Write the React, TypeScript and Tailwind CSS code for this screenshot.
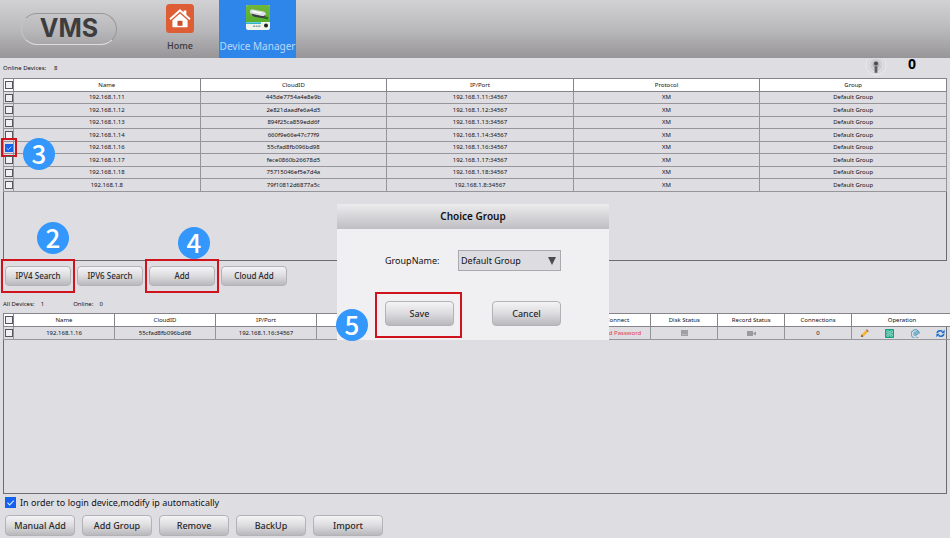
import React from "react";

type Step = "2" | "3" | "4" | "5";

const onlineDevices = [
  ["192.168.1.11", "445de7754a4e8e9b", "192.168.1.11:34567"],
  ["192.168.1.12", "2e821daadfe6a4d5", "192.168.1.12:34567"],
  ["192.168.1.13", "894f25ca859edd6f", "192.168.1.13:34567"],
  ["192.168.1.14", "660f9e66e47c77f9", "192.168.1.14:34567"],
  ["192.168.1.16", "55cfad8fb096bd98", "192.168.1.16:34567"],
  ["192.168.1.17", "fece0860b26678d5", "192.168.1.17:34567"],
  ["192.168.1.18", "75715046ef5e7d4a", "192.168.1.18:34567"],
  ["192.168.1.8", "79f10812d6877a5c", "192.168.1.8:34567"],
];

function StepBadge({ step, className }: { step: Step; className: string }) {
  return (
    <span
      className={`absolute z-10 flex size-8 items-center justify-center rounded-full bg-[#3397fb] pb-0.5 font-['Noto_Sans_CJK_SC',sans-serif] text-[26px] leading-none font-medium text-white ${className}`}
    >
      {step}
    </span>
  );
}

function Frame({ className }: { className: string }) {
  return <span className={`pointer-events-none absolute border-2 border-[#d0121c] ${className}`} />;
}

function PushButton({ children, className = "" }: { children: React.ReactNode; className?: string }) {
  return (
    <button
      type="button"
      className={`block rounded border border-[#b3b2b6] bg-linear-to-b from-[#f4f4f5] via-[#dcdbde] to-[#b9b8bc] leading-none font-medium whitespace-nowrap text-[#2a2a2d] ${className}`}
    >
      {children}
    </button>
  );
}

function Tick({ label, checked = false, large = false }: { label: string; checked?: boolean; large?: boolean }) {
  return (
    <span className={`relative block ${large ? "size-[11px]" : "mx-auto size-2"}`}>
      <input
        type="checkbox"
        id={label.replace(/\W/g, "-")}
        aria-label={label}
        defaultChecked={checked}
        className="peer block size-full appearance-none border border-[#55555c] bg-[#f1f0f3] checked:border-[#1463e6] checked:bg-[#1463f0]"
      />
      <svg viewBox="0 0 10 10" className="pointer-events-none absolute inset-0 hidden size-full peer-checked:block">
        <path d="M2.2 5.2l2 2 3.8-4" fill="none" stroke="#d5e6ff" strokeWidth="1" />
      </svg>
    </span>
  );
}

function HomeIcon() {
  return (
    <svg viewBox="0 0 28 29" className="h-[29px] w-7">
      <rect width="28" height="29" rx="3.5" fill="#dd5d34" />
      <path d="M3.4 14.6L14 5l3.6 3.2V6.4h2.800v4.400l4.200 3.800-1.300 1.500L14 7.800l-9.300 8.300z" fill="#fff" />
      <path d="M6.400 16.200L14 9.400l7.600 6.800v7H6.400z" fill="#fff" />
      <rect x="11.500" y="16.800" width="5" height="5" fill="#c9502d" />
    </svg>
  );
}

function DeviceIcon() {
  return (
    <svg viewBox="0 0 24 25" className="h-[25px] w-6">
      <defs>
        <linearGradient id="lawn" x1="0" y1="0" x2="0" y2="1">
          <stop offset="0" stopColor="#6fb73a" />
          <stop offset="1" stopColor="#58b02f" />
        </linearGradient>
      </defs>
      <rect width="24" height="25" rx="2" fill="#eef4ea" />
      <path d="M0 2a2 2 0 012-2h20a2 2 0 012 2v15H0z" fill="url(#lawn)" />
      <path d="M18 11l4 1v2.500l-5-1z" fill="#2f6f22" />
      <path d="M4 6.300c0-1.600 1.300-2.200 2.800-1.800l10.600 2c1.800.4 2.600 1.800 2.300 3.400-.3 1.900-1.800 2.600-3.600 2.200L7 10.500C5 10 4 8.500 4 6.300z" fill="#dfe0e2" />
      <path d="M5.200 8.600L16 11c1.600.300 2.800-.2 3.600-1.400 0 2.600-1.600 4-4 3.500L8.500 11.700c-1.800-.4-3-1.500-3.300-3.100z" fill="#3c4044" />
      <path d="M6.500 6.300l9 1.900" stroke="#fff" strokeWidth="1.300" />
      <rect y="17.300" width="15" height="1.700" fill="#35b4cf" />
      <path d="M7 21.300h8" stroke="#8fa0a0" strokeWidth="1.500" strokeDasharray="2 .6" />
      <circle cx="20" cy="20.500" r="2" fill="#222" />
    </svg>
  );
}

function AlarmIcon() {
  return (
    <svg viewBox="0 0 22 20" className="h-5 w-[22px]">
      <circle cx="11" cy="7" r="10" fill="#d9d8dc" stroke="#efeff1" strokeWidth=".8" />
      <circle cx="11" cy="7" r="7" fill="#cfced2" stroke="#ececef" strokeWidth=".7" />
      <circle cx="11" cy="6.500" r="4" fill="#b0afb4" stroke="#dcdce0" strokeWidth=".7" />
      <circle cx="11" cy="5.500" r="2" fill="#4b4a4e" />
      <path d="M9.600 8.300h2.800v6.500h-2.800z" fill="#5d5c61" />
    </svg>
  );
}

function PencilIcon() {
  return (
    <svg viewBox="0 0 10 10" className="size-[9px]">
      <path d="M1 9l.8-2.800L6.800 1.200l2 2-5 5z" fill="#f3b52d" />
      <path d="M6.800 1.200L7.600.4l2 2-.8.800z" fill="#a14a35" />
      <path d="M1 9l.8-2.800 2 2z" fill="#6b4a33" />
    </svg>
  );
}

function ConfigIcon() {
  return (
    <svg viewBox="0 0 10 10" className="size-[9px]">
      <rect width="10" height="10" rx="1" fill="#15a083" />
      <path d="M2 2h2.400v2.400H2zM5.800 2h2.400v2.400H5.800zM2 5.800h2.400v2.200H2zM5.800 5.800h2.400v2.200H5.800zM4.400 5h1.400" fill="none" stroke="#c9f5e9" strokeWidth=".7" />
    </svg>
  );
}

function IpIcon() {
  return (
    <svg viewBox="0 0 10 10" className="size-[9px]" fill="none" stroke="#2f8fb8" strokeWidth="1">
      <path d="M8 9.200A4.400 4.400 0 111.800 2 4.400 4.400 0 019.300 5" />
      <path d="M3.500 3v4.500M5.400 8.200V3h1.300a1.300 1.300 0 010 2.800H5.400" />
    </svg>
  );
}

function RefreshIcon() {
  return (
    <svg viewBox="0 0 10 10" className="size-[9px]" fill="none" stroke="#1f6fd0" strokeWidth="1.800">
      <path d="M1.200 4.500C1.800 2 5 1 7.300 2.900M8.800 5.500C8.200 8 5 9 2.700 7.100" />
      <path d="M9.600.8v4H5.800zM.4 9.200v-4h3.800z" fill="#1f6fd0" stroke="none" />
    </svg>
  );
}

const headCell = "border border-[#85848b] p-0 font-normal";
const cell = "border border-[#96959c] p-0";

export default function App() {
  return (
    <div className="relative flex h-screen min-h-[538px] flex-col overflow-hidden bg-[#dedde2] font-['Noto_Sans',sans-serif] text-[#111114]">
      <header className="flex h-[58px] shrink-0 bg-linear-to-b from-[#d2d1d3] via-[#bab9bb] to-[#979598]">
        <div className="flex w-[152px] items-center pl-[21px]">
          <div className="flex h-8 w-24 items-center justify-center rounded-full border border-t-[#98979a] border-r-[#98979a] border-b-[#dcdcde] border-l-[#c4c4c6] font-['Inter',sans-serif] text-[25px] font-bold text-[#3d3c3f]">
            VMS
          </div>
        </div>
        <button type="button" className="flex w-14 flex-col items-center pt-1 text-[9px] font-medium text-[#3a393c]">
          <HomeIcon />
          <span className="mt-[5px] leading-4">Home</span>
        </button>
        <button type="button" className="ml-[11px] flex w-[77px] flex-col items-center bg-[#2f86ea] pt-[5px] text-[10px] whitespace-nowrap text-[#b9d8fa]">
          <DeviceIcon />
          <span className="mt-2 leading-4">Device Manager</span>
        </button>
      </header>

      <main className="flex min-h-0 flex-1 flex-col px-[3px] pb-[2px]">
        <div className="flex h-5 shrink-0 items-center text-[6px]">
          <span className="whitespace-pre">Online Devices:     8</span>
          <span className="ml-auto flex h-5 w-[82px] items-start">
            <AlarmIcon />
            <span className="ml-[21px] text-sm leading-3 font-bold text-black">0</span>
          </span>
        </div>

        <section className="min-h-0 flex-[1_1_4px] border border-[#6d6c73]">
          <table className="-mt-px -ml-px w-[calc(100%+2px)] table-fixed border-collapse text-center text-[6px] leading-[9px]">
            <thead>
              <tr className="h-[13px] bg-white">
                <th className={`${headCell} w-[10px]`}><Tick label="Select all online" /></th>
                {["Name", "CloudID", "IP/Port", "Protocol", "Group"].map((h) => (
                  <th key={h} className={headCell}>{h}</th>
                ))}
              </tr>
            </thead>
            <tbody>
              {onlineDevices.map(([name, cloud, ip]) => (
                <tr key={name} className="h-3 even:h-[13px]">
                  <td className={`${cell} relative`}>
                    <Tick label={`Select ${name}`} checked={name === "192.168.1.16"} />
                    {name === "192.168.1.16" && (
                      <>
                        <Frame className="-top-1 -left-[3px] h-[19px] w-4" />
                        <StepBadge step="3" className="-top-1 left-[19px]" />
                      </>
                    )}
                  </td>
                  <td className={cell}>{name}</td>
                  <td className={cell}>{cloud}</td>
                  <td className={cell}>{ip}</td>
                  <td className={cell}>XM</td>
                  <td className={cell}>Default Group</td>
                </tr>
              ))}
            </tbody>
          </table>
        </section>

        <div className="flex h-[34px] shrink-0 gap-1.5 px-0.5 pt-[5px] text-[8px]">
          <div className="relative">
            <PushButton className="h-5 w-[66px]">IPV4 Search</PushButton>
            <Frame className="-top-[7px] -left-1 h-[34px] w-[74px]" />
            <StepBadge step="2" className="-top-11 left-8" />
          </div>
          <PushButton className="h-5 w-[66px]">IPV6 Search</PushButton>
          <div className="relative">
            <PushButton className="h-5 w-[66px]">Add</PushButton>
            <Frame className="-top-[7px] -left-1 h-[34px] w-[74px]" />
            <StepBadge step="4" className="-top-[39px] left-[29px]" />
          </div>
          <PushButton className="h-5 w-[66px]">Cloud Add</PushButton>
        </div>

        <div className="flex h-[18px] shrink-0 items-center gap-[29px] text-[6px] whitespace-pre">
          <span>All Devices:    1</span>
          <span>Online:    0</span>
        </div>

        <section className="min-h-0 flex-1 border border-[#6d6c73]">
          <table className="-mt-px -ml-px w-[calc(100%+8px)] table-fixed border-collapse text-center text-[6px] leading-[9px]">
            <thead>
              <tr className="h-[13px] bg-white">
                <th className={`${headCell} w-[10px]`}><Tick label="Select all devices" /></th>
                <th className={`${headCell} w-[101px]`}>Name</th>
                <th className={`${headCell} w-[101px]`}>CloudID</th>
                <th className={`${headCell} w-[101px]`}>IP/Port</th>
                <th className={headCell} />
                <th className={headCell} />
                <th className={headCell} />
                <th className={headCell} />
                <th className={headCell}>Connect</th>
                <th className={headCell}>Disk Status</th>
                <th className={headCell}>Record Status</th>
                <th className={headCell}>Connections</th>
                <th className={`${headCell} w-[101px]`}>Operation</th>
              </tr>
            </thead>
            <tbody>
              <tr className="h-[13px]">
                <td className={cell}><Tick label="Select saved 192.168.1.16" /></td>
                <td className={cell}>192.168.1.16</td>
                <td className={cell}>55cfad8fb096bd98</td>
                <td className={cell}>192.168.1.16:34567</td>
                <td className={cell} />
                <td className={cell} />
                <td className={cell} />
                <td className={cell} />
                <td className={`${cell} whitespace-nowrap text-[#e8384a]`}>Invalid Password</td>
                <td className={cell}>
                  <svg viewBox="0 0 7 6" className="mx-auto h-1.5 w-[7px]">
                    <path d="M0 0h7v6H0z" fill="#a09fa4" />
                    <path d="M1 4.500h5" stroke="#b8b8bc" />
                  </svg>
                </td>
                <td className={cell}>
                  <svg viewBox="0 0 9 5" className="mx-auto h-[5px] w-[9px]">
                    <path d="M0 0h6v5H0zM6.200 2L9 .5v4L6.200 3z" fill="#9b9a9f" />
                  </svg>
                </td>
                <td className={cell}>0</td>
                <td className={cell}>
                  <div className="flex items-center justify-between pr-[7px] pl-2">
                    <button type="button" aria-label="Edit"><PencilIcon /></button>
                    <button type="button" aria-label="Configure"><ConfigIcon /></button>
                    <button type="button" aria-label="IP settings"><IpIcon /></button>
                    <button type="button" aria-label="Refresh"><RefreshIcon /></button>
                  </div>
                </td>
              </tr>
            </tbody>
          </table>
        </section>

        <div className="flex h-[21px] shrink-0 items-start gap-1 px-0.5 pt-[3px] text-[9px]">
          <Tick label="Modify ip" checked large />
          <label htmlFor="Modify-ip" className="leading-3">In order to login device,modify ip automatically</label>
        </div>
        <div className="flex shrink-0 gap-[7px] px-0.5 text-[9px]">
          {["Manual Add", "Add Group", "Remove", "BackUp", "Import"].map((t) => (
            <PushButton key={t} className="h-[21px] w-[70px]">{t}</PushButton>
          ))}
        </div>
      </main>

      <div role="dialog" aria-labelledby="dialog-title" className="absolute top-[204px] right-1 left-0 mx-auto h-[136px] w-[272px] bg-[#f0eff2]">
        <h2 id="dialog-title" className="flex h-[25px] items-center justify-center bg-linear-to-b from-[#ececee] to-[#bfbec2] text-[10px] font-semibold text-[#111113]">
          Choice Group
        </h2>
        <div className="mt-[21px] flex items-center px-12 text-[9px]">
          <label htmlFor="group">GroupName:</label>
          <span className="relative ml-auto">
            <select id="group" className="block h-[21px] w-[103px] appearance-none border border-[#aaa9ae] bg-[#dddce0] pl-0.5 text-[9px]">
              <option>Default Group</option>
            </select>
            <svg viewBox="0 0 8 8" className="pointer-events-none absolute top-[7px] right-[5px] size-2">
              <path d="M0 0h8L4 8z" fill="#4c4b50" />
            </svg>
          </span>
        </div>
        <div className="mt-[30px] flex justify-between px-12 text-[9px]">
          <div className="relative">
            <PushButton className="h-[25px] w-[69px]">Save</PushButton>
            <Frame className="-top-[9px] -left-[10px] h-[46px] w-[87px]" />
          </div>
          <PushButton className="h-[25px] w-[69px]">Cancel</PushButton>
        </div>
        <StepBadge step="5" className="top-[105px] -left-px" />
      </div>
    </div>
  );
}
